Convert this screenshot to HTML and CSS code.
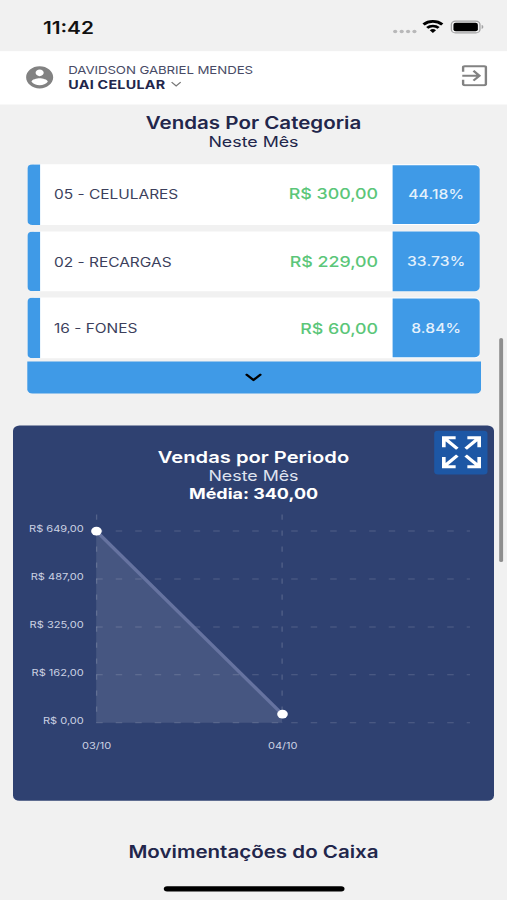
FILE: index.html
```html
<!DOCTYPE html>
<html lang="pt-BR">
<head>
    <meta charset="UTF-8">
    <meta name="viewport" content="width=device-width, initial-scale=1.0">
    <title>UAI Celular</title>
    <link rel="stylesheet" href="styles.css">
</head>
<body>
    <div class="screen">
        <div class="status-bar">
            <span class="time">11:42</span>
            <svg class="status-icons" width="70" height="16" viewBox="0 0 70 16">
                <g fill="#b8b8b9">
                    <circle cx="2" cy="12.5" r="1.6"/>
                    <circle cx="7" cy="12.5" r="1.6"/>
                    <circle cx="11.9" cy="12.5" r="1.6"/>
                    <circle cx="16.8" cy="12.5" r="1.6"/>
                </g>
                <g fill="none" stroke="#000" stroke-width="2.4">
                    <path d="M23.8 6a10.3 10.3 0 0 1 14.4 0"/>
                    <path d="M26.6 9.2a6.4 6.4 0 0 1 8.8 0"/>
                </g>
                <path d="M28.6 11.3a3.6 3.6 0 0 1 4.8 0L31 14z"/>
                <rect x="45.2" y="2.8" width="22" height="11" rx="3.2" fill="none" stroke="#a3a3a4"/>
                <rect x="46.8" y="4.3" width="18.8" height="8" rx="1.8"/>
                <path d="M68.5 6.5v3.6c1-.4 1.4-1 1.4-1.8s-.4-1.4-1.4-1.8z" fill="#a3a3a4"/>
            </svg>
        </div>

        <div class="header">
            <svg class="avatar" width="25" height="25" viewBox="0 0 24 24">
                <path fill="#828282" d="M12 2C6.48 2 2 6.48 2 12s4.48 10 10 10 10-4.48 10-10S17.52 2 12 2zm0 3c1.66 0 3 1.34 3 3s-1.34 3-3 3-3-1.34-3-3 1.34-3 3-3zm0 14.2c-2.5 0-4.71-1.28-6-3.22.03-1.99 4-3.08 6-3.08 1.99 0 5.97 1.09 6 3.08-1.29 1.94-3.5 3.22-6 3.22z"/>
            </svg>
            <div class="user">
                <div class="user-name">DAVIDSON GABRIEL MENDES</div>
                <div class="store">
                    <span>UAI CELULAR</span>
                    <svg width="9" height="6" viewBox="0 0 9 6"><path d="M1 1l3.5 3.6L8 1" fill="none" stroke="#777"/></svg>
                </div>
            </div>
            <svg class="logout" width="20" height="20" viewBox="0 0 20 20" fill="none" stroke="#828282" stroke-width="1.9">
                <path d="M1.2 6.2V2.4q0-1.3 1.3-1.3h15q1.3 0 1.3 1.3v15.2q0 1.3-1.3 1.3h-15q-1.3 0-1.3-1.3v-3.8"/>
                <path d="M.6 10h12.6M9.2 5.4l4.6 4.6-4.6 4.6"/>
            </svg>
        </div>

        <div class="title title-top">
            <h2>Vendas Por Categoria</h2>
            <p>Neste Mês</p>
        </div>

        <div class="category-list">
            <div class="category">
                <span class="category-name">05 - CELULARES</span>
                <span class="category-value">R$ 300,00</span>
                <span class="category-percent">44.18%</span>
            </div>
            <div class="category">
                <span class="category-name">02 - RECARGAS</span>
                <span class="category-value">R$ 229,00</span>
                <span class="category-percent">33.73%</span>
            </div>
            <div class="category">
                <span class="category-name">16 - FONES</span>
                <span class="category-value">R$ 60,00</span>
                <span class="category-percent">8.84%</span>
            </div>
        </div>
        <div class="more">
            <svg width="14" height="9" viewBox="0 0 14 9"><path d="M1.8 1.4L7 6.4l5.2-5" fill="none" stroke="#000" stroke-width="2" stroke-linecap="round" stroke-linejoin="round"/></svg>
        </div>

        <div class="card">
            <div class="title title-card">
                <h2>Vendas por Periodo</h2>
                <p>Neste Mês</p>
                <strong>Média: 340,00</strong>
            </div>
            <div class="expand">
                <svg width="32" height="32" viewBox="0 0 32 32" fill="none" stroke="#fff" stroke-width="2.8">
                    <path d="M11.5 2.4H2.4v9M2.4 2.4l10.4 10.4"/>
                    <path d="M20.5 2.4h9.1v9M29.6 2.4L19.2 12.8"/>
                    <path d="M11.5 29.6H2.4v-9M2.4 29.6l10.4-10.4"/>
                    <path d="M20.5 29.6h9.1v-9M29.6 29.6L19.2 19.2"/>
                </svg>
            </div>
            <!-- gráfico de vendas -->
            <svg class="chart" width="370" height="272" viewBox="0 80 370 272">
                <path d="M64 99L207 270.6V278.7H64z" fill="#fff" fill-opacity=".115"/>
                <g class="grid">
                    <path d="M64 99H351.5"/>
                    <path d="M64 144H351.5"/>
                    <path d="M64 189H351.5"/>
                    <path d="M64 233.8H351.5"/>
                    <path d="M64 278.7H351.5"/>
                    <path d="M64.3 83.4V278.7"/>
                    <path d="M207 83.4V278.7"/>
                </g>
                <path d="M64 99L207 270.6" stroke="#6673a0" stroke-width="2.8"/>
                <circle cx="64.2" cy="99" r="4.1" fill="#fff"/>
                <circle cx="207.3" cy="270.6" r="4.1" fill="#fff"/>
                <g class="label-y">
                    <text x="54.4" y="99.6">R$ 649,00</text>
                    <text x="54.4" y="144.6">R$ 487,00</text>
                    <text x="54.4" y="189.5">R$ 325,00</text>
                    <text x="54.4" y="234.6">R$ 162,00</text>
                    <text x="54.4" y="279.6">R$ 0,00</text>
                </g>
                <g class="label-x">
                    <text x="64.3" y="303.2">03/10</text>
                    <text x="207.5" y="303.2">04/10</text>
                </g>
            </svg>
        </div>

        <div class="title title-bottom">
            <h2>Movimentações do Caixa</h2>
        </div>

        <div class="scrollbar"></div>
        <div class="home-indicator"></div>
    </div>
</body>
</html>
```
FILE: styles.css
```css
*{
    margin: 0;
    padding: 0;
    box-sizing: border-box;
}
body{
    width: 507px;
    height: 900px;
    overflow: hidden;
    background: #f1f1f1;
    font-family: Inter, "Liberation Sans", sans-serif;
    color: #22264b;
}
.screen{
    position: relative;
    width: 390px;
    height: 844px;
    overflow: hidden;
    transform: scale(1.3, 1.0664);
    transform-origin: 0 0;
}
.status-bar{
    display: flex;
    justify-content: space-between;
    height: 48px;
    padding: 15px 18px 0 33px;
}
.time{
    font-size: 16px;
    line-height: 22px;
    font-weight: 600;
    color: #111;
}
.status-icons{
    margin-top: 2px;
}
.header{
    display: flex;
    height: 50px;
    padding-left: 18px;
    padding-right: 15.5px;
    background: #fff;
}
.avatar{
    margin-top: 12px;
}
.user{
    flex: 1;
    margin-left: 9.5px;
    padding-top: 11px;
}
.user-name{
    font-size: 10.2px;
    line-height: 13px;
    letter-spacing: -.06px;
    color: #484b66;
}
.store{
    display: flex;
    align-items: center;
    gap: 4px;
    font-size: 11px;
    line-height: 14px;
    font-weight: 700;
    letter-spacing: .2px;
}
.logout{
    margin-top: 12.5px;
}
.title{
    text-align: center;
}
.title h2{
    font-size: 15.8px;
    line-height: 19px;
    font-weight: 600;
}
.title p{
    font-size: 13.7px;
    line-height: 17px;
}
.title-top{
    height: 56px;
    padding-top: 8px;
}
.category-list{
    display: flex;
    flex-direction: column;
    gap: 6px;
    margin: 0 20.8px 0 20.5px;
}
.category{
    display: flex;
    align-items: center;
    height: 56.7px;
    padding-left: 11px;
    border-left: 10px solid #3f9ae7;
    border-radius: 4px;
    background: #fff;
}
.category-name{
    flex: 1;
    font-size: 11.9px;
    color: #3c3f5c;
}
.category-value{
    font-size: 13.7px;
    font-weight: 500;
    color: #5bc679;
}
.category-percent{
    width: 67.4px;
    height: 55.5px;
    margin-left: 11px;
    border-radius: 0 4px 4px 0;
    line-height: 56px;
    font-size: 12px;
    font-weight: 500;
    letter-spacing: .1px;
    text-align: center;
    color: #e4f1fc;
    background: #3f9ae7;
}
.more{
    display: flex;
    align-items: center;
    justify-content: center;
    height: 30px;
    margin: 3px 20px 0 20.5px;
    border-radius: 0 0 4px 4px;
    background: #3f9ae7;
}
.card{
    position: relative;
    height: 352.8px;
    margin: 29.5px 10px 0;
    border-radius: 5px;
    background: #2f4171;
    color: #fff;
}
.title-card{
    height: 80px;
    padding-top: 20px;
}
.title-card h2{
    font-size: 15.5px;
}
.title-card p{
    padding-top: .8px;
    color: #dfe3ef;
}
.title-card strong{
    display: block;
    font-size: 13.8px;
    line-height: 17px;
    font-weight: 700;
}
.expand{
    position: absolute;
    top: 5.2px;
    right: 4.7px;
    display: flex;
    align-items: center;
    justify-content: center;
    width: 41px;
    height: 41px;
    border-radius: 3px;
    background: #1d57a5;
}
.chart{
    display: block;
}
.grid path{
    fill: none;
    stroke: #fff;
    stroke-opacity: .17;
    stroke-dasharray: 5 10;
}
.label-y,
.label-x{
    font-size: 8.5px;
    fill: #ccd2e3;
}
.label-y{
    text-anchor: end;
}
.label-x{
    text-anchor: middle;
}
.title-bottom{
    padding-top: 38.5px;
}
.scrollbar{
    position: absolute;
    top: 317px;
    right: 3px;
    width: 3px;
    height: 210px;
    border-radius: 2px;
    background: #8e8e8e;
}
.home-indicator{
    position: absolute;
    left: 126px;
    bottom: 8px;
    width: 139px;
    height: 5px;
    border-radius: 3px;
    background: #000;
}
```
